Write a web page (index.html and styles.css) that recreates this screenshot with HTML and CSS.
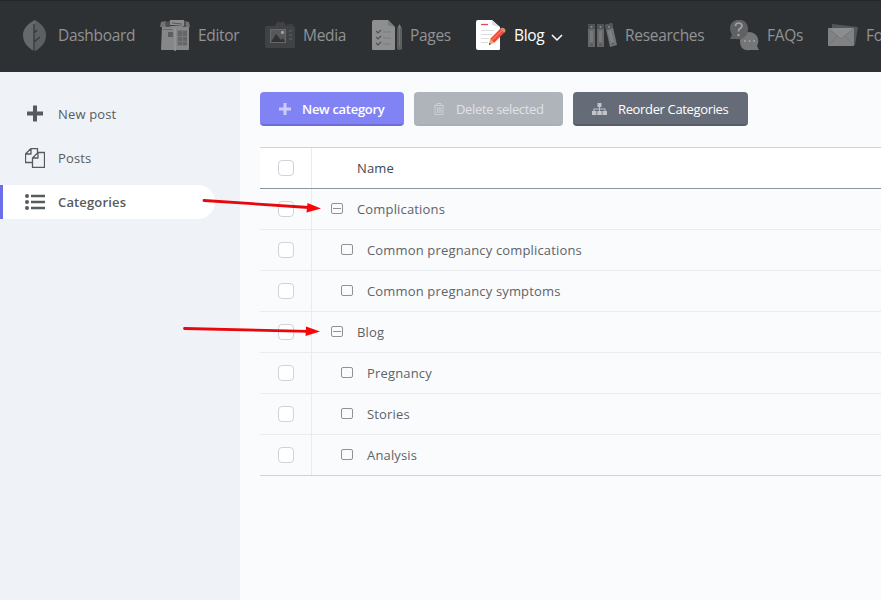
FILE: index.html
```html
<!DOCTYPE html>
<html lang="en">
<head>
    <meta charset="UTF-8">
    <meta name="viewport" content="width=device-width, initial-scale=1.0">
    <title>Blog categories</title>
    <link rel="stylesheet" href="styles.css">
</head>
<body>
    <nav class="topbar">
        <a class="nav-item">
            <svg class="nav-icon" viewBox="0 0 30 31">
                <path d="M15 0C7 4 3 9 3 15c0 8 5 12 9 15l3 1z" fill="#66696b"/>
                <path d="M15 0c7 4 11 9 11 15 0 8-5 12-9 15l-2 1z" fill="#5d6062"/>
                <path d="M14 31V4M14 13l3-3M14 22l6-5" stroke="#35383a" stroke-width="1.300" fill="none"/>
            </svg>
            <span class="nav-label">Dashboard</span>
        </a>
        <a class="nav-item">
            <svg class="nav-icon" viewBox="0 0 30 31">
                <path d="M2 6h27v23q0 1-1 1H16l-1 1-1-1H2q-1 0-1-1z" fill="#858788"/>
                <path d="M1 2l5-1v6H0zM24 1l5 1 1 5h-5z" fill="#727476"/>
                <path d="M5 2l5-1v6H6zM23 1l3 1v5h-3z" fill="#4e5153"/>
                <path d="M10 0h14v6l-14-1z" fill="#8b8d8e"/>
                <path d="M12 3l10 1" stroke="#55585a"/>
                <path d="M3 9.500h9" stroke="#666869"/>
                <path d="M15 8v23" stroke="#9b9d9e"/>
                <path d="M8 12h5v5H8z" fill="#5c5e60"/>
                <path d="M17 10h10v16H17z" fill="#77797b"/>
                <path d="M18 11h4v5h-4zM23 11h4v5h-4zM18 17h4v4h-4zM23 17h4v4h-4zM18 22h4v3h-4zM23 22h4v3h-4z" fill="#646668"/>
            </svg>
            <span class="nav-label">Editor</span>
        </a>
        <a class="nav-item">
            <svg class="nav-icon" viewBox="0 0 30 31">
                <path d="M2 6h8l2-4h7l2 4h7q2 0 2 2v19q0 1-2 1H2q-2 0-2-2V8q0-2 2-2z" fill="#404244"/>
                <path d="M22 4h6v2h-6z" fill="#3b3d3f"/>
                <path d="M5 9h16v14H5z" fill="#666869"/>
                <path d="M6 10h14v12H6z" fill="#56585a"/>
                <path d="M6 22l5-8 5 6 2-2 2 4z" fill="#303235"/>
                <circle cx="17.500" cy="12.500" r="1.700" fill="#9b9c9d"/>
                <path d="M24 11h3M24 15h3M24 19h3" stroke="#565859" stroke-width="1.500"/>
            </svg>
            <span class="nav-label">Media</span>
        </a>
        <a class="nav-item">
            <svg class="nav-icon" viewBox="0 0 30 31">
                <path d="M2 0h14l7 7v22q0 1-1 1H1q-1 0-1-1V2q0-2 2-2z" fill="#8d8f90"/>
                <path d="M16 0l7 7-7-2z" fill="#77797b"/>
                <path d="M4 11l2 2 3-3M4 17l2 2 3-3M4 23l2 2 3-3" fill="none" stroke="#505355" stroke-width="1.200"/>
                <path d="M11 12h8M11 18h8M11 24h8" stroke="#7a7c7e"/>
                <path d="M25 9l2.500-5L30 9z" fill="#77797a"/>
                <path d="M25 8h5v21q-2.500 2-5 0z" fill="#5c5e60"/>
                <path d="M27.500 8v18" stroke="#707274"/>
            </svg>
            <span class="nav-label">Pages</span>
        </a>
        <a class="nav-item active">
            <svg class="nav-icon" viewBox="0 0 30 31">
                <path d="M2 0h14l8 7v22q0 1-1 1H2q-2 0-2-2V2q0-2 2-2z" fill="#fff"/>
                <path d="M16 0l7 7-7-2z" fill="#dedfdf"/>
                <path d="M5 4.500h7" stroke="#dc4b5b" stroke-width="1.300"/>
                <path d="M5 10.500h13M5 14.500h11M5 18.500h8M5 22.500h7" stroke="#dcddde"/>
                <path d="M14 19L24 9l4 4-10 10z" fill="#ed493d"/>
                <path d="M15.500 20.500L26 10.500" stroke="#ff7054" stroke-width="1.500"/>
                <path d="M24 9l1-1q2-1 4 1 1 2 0 3l-1 1z" fill="#d48e71"/>
                <path d="M14 19l4 4-5 2z" fill="#ddb176"/>
                <path d="M13 23l2 1-2 1z" fill="#3b3533"/>
            </svg>
            <span class="nav-label">Blog</span>
            <svg class="chevron" viewBox="0 0 12 8"><path d="M1 1l5 5 5-5" fill="none" stroke="currentColor" stroke-width="1.500"/></svg>
        </a>
        <a class="nav-item">
            <svg class="nav-icon" viewBox="0 0 30 31">
                <path d="M1 4h7v23H1zM10 4h7v23h-7z" fill="#66686a"/>
                <path d="M1 4h7v5H1zM10 4h7v5h-7z" fill="#505254"/>
                <path d="M18 5l7-2 5 22-7 2z" fill="#717375"/>
                <path d="M18 5l7-2 1 5-7 2z" fill="#545658"/>
                <path d="M3 11h3v11H3zM12 11h3v11h-3z" fill="#77797b"/>
                <path d="M21 11l3-1 3 12-3 1z" fill="#808284"/>
                <g fill="#898b8c"><circle cx="4.500" cy="7" r="1"/><circle cx="13.500" cy="7" r="1"/><circle cx="22" cy="7" r="1"/></g>
                <path d="M3 25h3M12 25h3M25 24l2-.5" stroke="#494b4d"/>
            </svg>
            <span class="nav-label">Researches</span>
        </a>
        <a class="nav-item">
            <svg class="nav-icon" viewBox="0 0 30 31">
                <path d="M30 30l-2-4c7-15-17-20-17-5 0 8 5 10 10 9z" fill="#747678"/>
                <path d="M1 19l2-4C-6-2 19-6 19 9c0 9-8 11-12 10z" fill="#5f6163"/>
                <path d="M6.500 6q0-3 3-3t3.500 2.500q0 2-2 3-1.500 1-1.500 3" fill="none" stroke="#a3a4a5" stroke-width="1.700"/>
                <circle cx="9.500" cy="15" r="1.200" fill="#a3a4a5"/>
                <g fill="#a2a3a4"><circle cx="16" cy="21" r="1"/><circle cx="20.500" cy="21" r="1"/><circle cx="25" cy="21" r="1"/></g>
            </svg>
            <span class="nav-label">FAQs</span>
        </a>
        <a class="nav-item">
            <svg class="nav-icon" viewBox="0 0 30 31">
                <path d="M4 4l26 3-3 18H4z" fill="#545658"/>
                <path d="M0 8h26v18H0z" fill="#808284"/>
                <path d="M0 8h26L13 19z" fill="#8b8d8e"/>
                <path d="M0 26l9-10M26 26l-9-10M0 8l13 11L26 8" fill="none" stroke="#747678"/>
            </svg>
            <span class="nav-label">Fo</span>
        </a>
    </nav>

    <div class="layout">
        <aside class="sidebar">
            <a class="side-item">
                <svg class="side-icon" viewBox="0 0 20 20"><path d="M8 1.500h4V7.500h6v4h-6v6H8v-6H2v-4h6z" fill="currentColor"/></svg>
                <span class="side-label">New post</span>
            </a>
            <a class="side-item">
                <svg class="side-icon" viewBox="0 0 20 20">
                    <path d="M7.500 14.500h-7V6L6 .5h6.500V5M.5 6H6V.5M19.500 19.500h-12V10L13 4.500h6.500zM7.500 10H13V4.500" fill="none" stroke="currentColor" stroke-width="1.300" stroke-linejoin="round"/>
                </svg>
                <span class="side-label">Posts</span>
            </a>
            <a class="side-item selected">
                <svg class="side-icon" viewBox="0 0 20 20">
                    <g fill="currentColor"><circle cx="2" cy="4" r="2"/><circle cx="2" cy="10" r="2"/><circle cx="2" cy="16" r="2"/></g>
                    <path d="M6 4h14M6 10h14M6 16h14" stroke="currentColor" stroke-width="2.500"/>
                </svg>
                <span class="side-label">Categories</span>
            </a>
        </aside>

        <main class="content">
            <div class="toolbar">
                <button class="btn btn-new">
                    <svg class="btn-icon" viewBox="0 0 12 12"><path d="M4.500 0h3v4.500H12v3H7.500V12h-3V7.500H0v-3h4.500z" fill="currentColor"/></svg>
                    <span>New category</span>
                </button>
                <button class="btn btn-delete" disabled>
                    <svg class="btn-icon" viewBox="0 0 12 12"><path d="M1 2.500h10M4 2V.5h4V2M2 3v8.500h8V3M4.500 4v6M6.200 4v6M8 4v6" fill="none" stroke="currentColor"/></svg>
                    <span>Delete selected</span>
                </button>
                <button class="btn btn-reorder">
                    <svg class="btn-icon wide" viewBox="0 0 15 12">
                        <path d="M5.500 0h4v4h-4zM0 8h4.500v4H0zM5.300 8h4.500v4h-4.500zM10.500 8H15v4h-4.500zM7 3h1v2.500h5.500V8h-1V6.500H8V8H7V6.500H2.500V8h-1V5.500H7z" fill="currentColor"/>
                    </svg>
                    <span>Reorder Categories</span>
                </button>
            </div>

            <div class="table">
                <div class="row head">
                    <div class="check-cell"><span class="checkbox"></span></div>
                    <div class="name-cell"><span>Name</span></div>
                </div>
                <div class="row">
                    <div class="check-cell"><span class="checkbox"></span></div>
                    <div class="name-cell"><i class="node open"></i><span>Complications</span></div>
                </div>
                <div class="row child">
                    <div class="check-cell"><span class="checkbox"></span></div>
                    <div class="name-cell"><i class="node"></i><span>Common pregnancy complications</span></div>
                </div>
                <div class="row child">
                    <div class="check-cell"><span class="checkbox"></span></div>
                    <div class="name-cell"><i class="node"></i><span>Common pregnancy symptoms</span></div>
                </div>
                <div class="row">
                    <div class="check-cell"><span class="checkbox"></span></div>
                    <div class="name-cell"><i class="node open"></i><span>Blog</span></div>
                </div>
                <div class="row child">
                    <div class="check-cell"><span class="checkbox"></span></div>
                    <div class="name-cell"><i class="node"></i><span>Pregnancy</span></div>
                </div>
                <div class="row child">
                    <div class="check-cell"><span class="checkbox"></span></div>
                    <div class="name-cell"><i class="node"></i><span>Stories</span></div>
                </div>
                <div class="row child">
                    <div class="check-cell"><span class="checkbox"></span></div>
                    <div class="name-cell"><i class="node"></i><span>Analysis</span></div>
                </div>
            </div>
        </main>
    </div>

    <!-- arrows pointing at the parent categories -->
    <svg class="arrows" viewBox="0 0 881 600">
        <path d="M204 200.500L309 207.500M184.500 328.500L308 331.300" stroke="#e8070c" stroke-width="2.800" stroke-linecap="round"/>
        <path d="M307.500 203L321 208.500 306.500 212.500zM306 326.500L320 331.500 305.500 336z" fill="#fb0509"/>
    </svg>
</body>
</html>
```
FILE: styles.css
```css
* {
    box-sizing: border-box;
}

body {
    margin: 0;
    height: 600px;
    overflow: hidden;
    background-color: #fafbfd;
    color: #5f6367;
    font-family: "Segoe UI", "Open Sans", "Noto Sans", sans-serif;
    font-size: 13px;
}

.topbar {
    display: grid;
    grid-template-columns: 140px 105px 107px 104px 111px 142px 99px 100px;
    height: 72px;
    padding: 0 0 2px 20px;
    background-color: #2e3133;
    border-top: 1px solid #232628;
    overflow: hidden;
}

.nav-item {
    display: flex;
    align-items: center;
    color: #919395;
    font-size: 15.5px;
    white-space: nowrap;
}

.nav-item.active {
    color: #fff;
}

.nav-icon {
    flex: none;
    width: 30px;
    height: 31px;
    margin-right: 8px;
}

.nav-label {
    margin-top: -1px;
    letter-spacing: -0.3px;
}

.chevron {
    width: 12px;
    height: 8px;
    margin: 5px 0 0 7px;
}

.layout {
    display: flex;
    height: 528px;
}

.sidebar {
    display: flex;
    flex: none;
    flex-direction: column;
    gap: 10px;
    width: 240px;
    padding-top: 25px;
    background-color: #eff3f8;
}

.side-item {
    display: flex;
    align-items: center;
    width: 215px;
    height: 34px;
    padding-left: 25px;
    color: #565b5e;
    letter-spacing: 0.15px;
}

.side-item.selected {
    padding-left: 22px;
    border-left: 3px solid #6c6de8;
    border-radius: 0 17px 17px 0;
    background-color: #fff;
    font-weight: 600;
}

.side-icon {
    width: 20px;
    height: 20px;
    margin-right: 13px;
}

.content {
    flex: 1;
    min-width: 0;
    padding: 20px 0 0 20px;
}

.toolbar {
    display: flex;
    gap: 10px;
    margin-bottom: 21px;
}

.btn {
    display: flex;
    align-items: center;
    height: 34px;
    padding: 2px 0 0 19px;
    border: none;
    border-bottom: 2px solid;
    border-radius: 4px;
    color: #fff;
    font-family: inherit;
    font-size: 13px;
    letter-spacing: -0.35px;
    white-space: nowrap;
}

.btn-icon {
    flex: none;
    width: 12px;
    height: 12px;
    margin: -1px 11px 0 0;
    opacity: 0.6;
}

.btn-icon.wide {
    width: 15px;
}

.btn-new {
    width: 144px;
    background-color: #8183f4;
    border-color: #6c6edb;
    font-weight: 600;
    letter-spacing: -0.3px;
}

.btn-delete {
    width: 149px;
    background-color: #afb4bb;
    border-color: #aaafb7;
    color: #dfe2e6;
}

.btn-reorder {
    width: 175px;
    background-color: #656c78;
    border-color: #555c68;
}

.table {
    border-top: 1px solid #ced3da;
    letter-spacing: 0.16px;
}

.row {
    display: flex;
    height: 41px;
    border-bottom: 1px solid #eaedf0;
}

.row.head {
    background-color: #fff;
    border-color: #8d949b;
    color: #3d4754;
}

.row:last-child {
    border-color: #ced3d8;
}

.check-cell {
    display: flex;
    flex: none;
    align-items: center;
    justify-content: center;
    width: 52px;
    border-right: 1px solid #e8ebef;
}

.checkbox {
    width: 16px;
    height: 16px;
    border: 1px solid #cfd3da;
    border-radius: 4px;
    background-color: #fff;
}

.name-cell {
    display: flex;
    align-items: center;
    padding-left: 19px;
}

.head .name-cell {
    padding-left: 45px;
}

.child .name-cell {
    padding-left: 29px;
}

.node {
    display: flex;
    align-items: center;
    justify-content: center;
    width: 12px;
    height: 11px;
    margin: -1px 14px 0 0;
    border: 1px solid #8f9397;
    border-radius: 2px;
}

.node.open::before {
    content: "";
    width: 8px;
    height: 1px;
    background-color: #8f9397;
}

.arrows {
    position: absolute;
    top: 0;
    left: 0;
    width: 881px;
    height: 600px;
    pointer-events: none;
}
```
